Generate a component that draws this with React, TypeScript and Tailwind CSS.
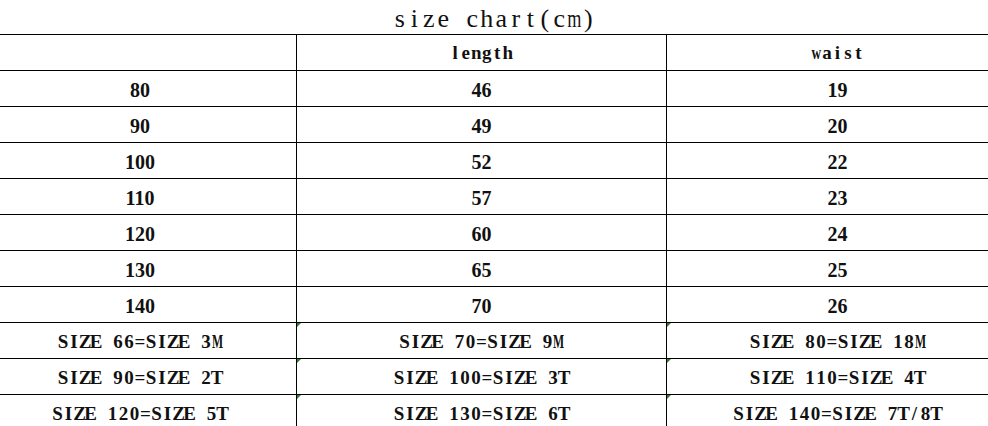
import React from "react";

const rows: [string, string, string][] = [
  ["80", "46", "19"],
  ["90", "49", "20"],
  ["100", "52", "22"],
  ["110", "57", "23"],
  ["120", "60", "24"],
  ["130", "65", "25"],
  ["140", "70", "26"],
];

const sizeRows: [string, string, string][] = [
  ["SIZE 66=SIZE 3M", "SIZE 70=SIZE 9M", "SIZE 80=SIZE 18M"],
  ["SIZE 90=SIZE 2T", "SIZE 100=SIZE 3T", "SIZE 110=SIZE 4T"],
  ["SIZE 120=SIZE 5T", "SIZE 130=SIZE 6T", "SIZE 140=SIZE 7T/8T"],
];

function squeeze(ch: string) {
  if (ch === "m" || ch === "w") return "scale-x-[0.7]";
  if (ch === "M") return "scale-x-[0.62]";
  return "";
}

/* Serif text laid out on a fixed pitch, like the SimSun-style monospaced serif of the chart */
function Pitch({ text, cell }: { text: string; cell: string }) {
  return (
    <span className="inline-flex whitespace-pre">
      {Array.from(text).map((ch, i) => (
        <span
          key={i}
          className={`inline-flex justify-center whitespace-pre ${cell} ${squeeze(ch)}`}
        >
          {ch}
        </span>
      ))}
    </span>
  );
}

function Marker() {
  return (
    <span className="absolute left-0 top-0 h-0 w-0 border-l-[4px] border-b-[4px] border-l-[#2e7d32] border-b-transparent" />
  );
}

const colPad = ["pr-[16px]", "", "pl-[20px]"];

export default function App() {
  return (
    <div className="w-[988px] h-[426px] overflow-hidden bg-white text-[#111] font-['Liberation_Serif','Times_New_Roman',serif]">
      <div className="h-[34px] flex items-end justify-center text-[26px] leading-[26px] pb-[2px]">
        <Pitch text="size chart(cm)" cell="w-[14.5px]" />
      </div>
      <div className="grid grid-cols-[296px_370px_1fr]">
        <div className="h-[36px] border-t border-black" />
        <div className="h-[36px] border-t border-l border-black flex items-center justify-center text-[19px] font-bold pt-[1px]">
          <Pitch text="length" cell="w-[10.5px]" />
        </div>
        <div className="h-[36px] border-t border-l border-black flex items-center justify-center text-[19px] font-bold pt-[1px] pl-[20px]">
          <Pitch text="waist" cell="w-[10.5px]" />
        </div>
        {rows.map((r, i) => (
          <React.Fragment key={i}>
            {r.map((c, j) => (
              <div
                key={j}
                className={`h-[36px] border-t border-black flex items-center justify-center text-[20px] font-bold pt-[3px] ${
                  j > 0 ? "border-l" : ""
                } ${colPad[j]}`}
              >
                {c}
              </div>
            ))}
          </React.Fragment>
        ))}
        {sizeRows.map((r, i) => (
          <React.Fragment key={`s${i}`}>
            {r.map((c, j) => (
              <div
                key={j}
                className={`relative h-[36px] border-t border-black flex items-center justify-center text-[19px] font-bold pt-[3px] ${
                  j > 0 ? "border-l" : ""
                } ${colPad[j]}`}
              >
                {j > 0 && <Marker />}
                <Pitch text={c} cell="w-[11px]" />
              </div>
            ))}
          </React.Fragment>
        ))}
      </div>
    </div>
  );
}
